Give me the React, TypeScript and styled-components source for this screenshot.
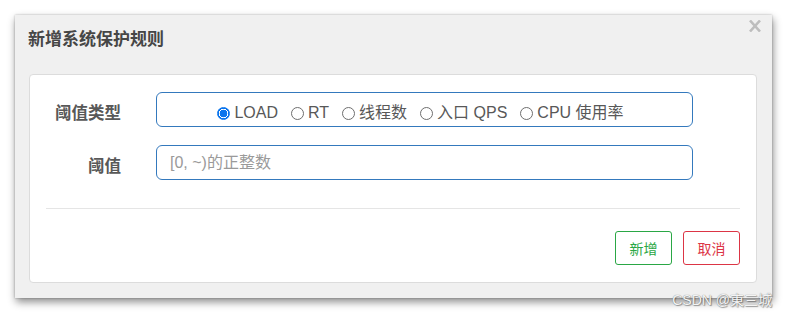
import React from "react";
import styled, { createGlobalStyle } from "styled-components";

const Global = createGlobalStyle`
  html, body { margin: 0; padding: 0; background: #fff; }
  body { font-family: "Liberation Sans", "Noto Sans CJK SC", Arial, sans-serif; }
  * { box-sizing: border-box; }
`;

const Page = styled.div`
  position: relative;
  width: 787px;
  height: 317px;
  padding: 15px 0 0 15px;
`;

const Dialog = styled.div`
  width: 757px;
  height: 283px;
  background: #f0f0f0;
  box-shadow: 1px 4px 8px rgba(0, 0, 0, 0.45), 0 0 2px rgba(0, 0, 0, 0.25);
  display: flex;
  flex-direction: column;
`;

const Header = styled.div`
  height: 59px;
  display: flex;
  justify-content: space-between;
  align-items: flex-start;
  padding: 0 10px 0 13px;
`;

const Title = styled.h4`
  margin: 13px 0 0;
  font-size: 17px;
  line-height: 20px;
  font-weight: 700;
  color: #464646;
  font-family: "Noto Sans CJK SC", "Liberation Sans", sans-serif;
`;

const Close = styled.button`
  margin-top: 5px;
  padding: 0;
  border: 0;
  background: transparent;
  width: 14px;
  height: 12px;
  display: flex;
  cursor: pointer;
`;

const Panel = styled.div`
  flex: 1;
  margin: 0 15px 15px 14px;
  background: #fff;
  border: 1px solid #dcdcdc;
  border-radius: 4px;
  padding: 17px 16px 0;
`;

const Form = styled.div`
  display: grid;
  grid-template-columns: 126px 537px;
  row-gap: 18px;
  margin-left: -16px;
`;

const Label = styled.div`
  height: 35px;
  padding: 5px 35px 0 0;
  display: flex;
  align-items: center;
  justify-content: flex-end;
  font-size: 16.5px;
  font-weight: 700;
  color: #585858;
  font-family: "Noto Sans CJK SC", "Liberation Sans", sans-serif;
`;

const Box = styled.div`
  height: 35px;
  border: 1px solid #3479bd;
  border-radius: 6px;
  background: #fff;
`;

const RadioGroup = styled(Box)`
  display: flex;
  justify-content: center;
  align-items: flex-start;
  gap: 13px;
  padding: 10px 8px 0 0;
`;

const RadioItem = styled.label`
  display: flex;
  align-items: center;
  gap: 4px;
  font-size: 16px;
  line-height: 20px;
  color: #585858;
  white-space: nowrap;
`;

const Radio = styled.input.attrs({ type: "radio" })`
  appearance: none;
  margin: 0;
  width: 13px;
  height: 13px;
  border-radius: 50%;
  border: 1px solid #6e6e6e;
  background: #fff;
  flex: none;
  &:checked {
    border-color: #0a74ed;
    background: radial-gradient(circle, #0a74ed 0 3.6px, #fff 4.1px 4.6px, #0a74ed 5px);
  }
`;

const TextInput = styled.input`
  width: 537px;
  height: 35px;
  border: 1px solid #3479bd;
  border-radius: 6px;
  padding: 0 13px;
  font-size: 16px;
  color: #555;
  font-family: "Liberation Sans", "Noto Sans CJK SC", sans-serif;
  outline: none;
  &::placeholder { color: #9a9a9a; }
`;

const Divider = styled.hr`
  margin: 28px 0 0;
  border: 0;
  border-top: 1px solid #e5e5e5;
`;

const Footer = styled.div`
  display: flex;
  justify-content: flex-end;
  gap: 11px;
  margin-top: 22px;
`;

const Btn = styled.button<{ $color: string }>`
  width: 57px;
  height: 34px;
  background: #fff;
  border: 1px solid ${(p) => p.$color};
  color: ${(p) => p.$color};
  border-radius: 3px;
  font-size: 14px;
  font-family: "Noto Sans CJK SC", "Liberation Sans", sans-serif;
  padding: 0;
  cursor: pointer;
`;

const Watermark = styled.div`
  position: absolute;
  right: 15px;
  top: 291px;
  font-size: 14px;
  line-height: 18px;
  color: #f4f4f4;
  font-family: "Liberation Sans", "Noto Sans CJK SC", sans-serif;
  text-shadow: 0 0 1px #6a6a6a, 1px 1px 1px rgba(0, 0, 0, 0.35);
`;

const options = ["LOAD", "RT", "线程数", "入口 QPS", "CPU 使用率"];

export default function App() {
  const [sel, setSel] = React.useState(0);
  return (
    <>
      <Global />
      <Page>
        <Dialog>
          <Header>
            <Title>新增系统保护规则</Title>
            <Close aria-label="close">
              <svg width="14" height="12" viewBox="0 0 14 12">
                <path d="M2 0.5 L12 11.5 M12 0.5 L2 11.5" stroke="#bdbdbd" strokeWidth="2.6" />
              </svg>
            </Close>
          </Header>
          <Panel>
            <Form>
              <Label>阈值类型</Label>
              <RadioGroup>
                {options.map((o, i) => (
                  <RadioItem key={o}>
                    <Radio name="grade" checked={sel === i} onChange={() => setSel(i)} />
                    {o}
                  </RadioItem>
                ))}
              </RadioGroup>
              <Label>阈值</Label>
              <TextInput placeholder="[0, ~)的正整数" />
            </Form>
            <Divider />
            <Footer>
              <Btn $color="#2aa745">新增</Btn>
              <Btn $color="#dc3545">取消</Btn>
            </Footer>
          </Panel>
        </Dialog>
        <Watermark>CSDN @東三城</Watermark>
      </Page>
    </>
  );
}
